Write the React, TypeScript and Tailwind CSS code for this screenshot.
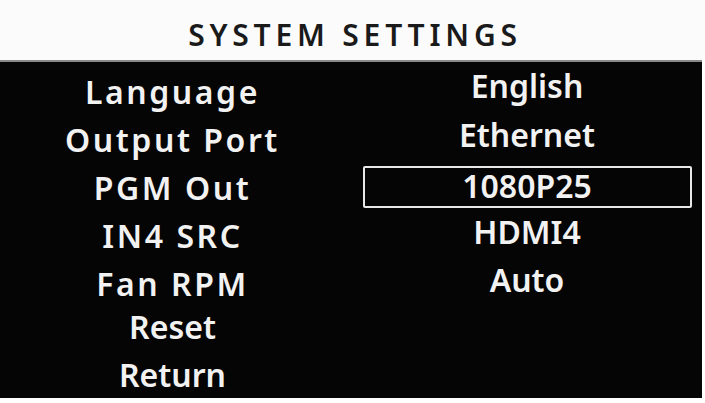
const labels = [
  { text: "Language", wide: true },
  { text: "Output Port", wide: true },
  { text: "PGM Out", wide: true },
  { text: "IN4 SRC", wide: true },
  { text: "Fan RPM", wide: true },
  { text: "Reset", wide: false },
  { text: "Return", wide: false },
];

const values = ["English", "Ethernet", "1080P25", "HDMI4", "Auto"];
const selected = 2;

export default function App() {
  return (
    <div className="flex h-[403px] w-[705px] flex-col overflow-hidden bg-white font-['Noto_Sans',sans-serif]">
      {/* Title */}
      <div className="flex h-[60px] items-center justify-center bg-[#fbfbfb] pt-[8px] pl-[5px]">
        <h1 className="text-[30px] font-semibold tracking-[0.16em] text-[#1a1a1a]">SYSTEM SETTINGS</h1>
      </div>

      {/* Menu */}
      <div className="mr-[3px] grid h-[338px] grid-cols-[345px_1fr] border-t-2 border-[#8a8a8a] bg-[#050505] text-[32px] font-semibold text-[#f2f2f2]">
        <div className="flex flex-col items-center pt-[6px]">
          {labels.map((l, i) => (
            <div
              key={l.text}
              className={`h-12 leading-[48px] ${l.wide ? "tracking-[0.08em]" : ""} ${i === 5 ? "-mt-[5px]" : ""}`}
            >
              {l.text}
            </div>
          ))}
        </div>

        <div className="flex flex-col items-center pl-[7px]">
          {values.map((v, i) =>
            i === selected ? (
              <div key={v} className="flex h-[48.5px] items-end">
                <div className="h-[42px] w-[329px] rounded-[2px] border-2 border-[#e8e8e8] text-center leading-[35px]">
                  {v}
                </div>
              </div>
            ) : (
              <div key={v} className="h-[48.5px] leading-[48px]">
                {v}
              </div>
            )
          )}
        </div>
      </div>
    </div>
  );
}
